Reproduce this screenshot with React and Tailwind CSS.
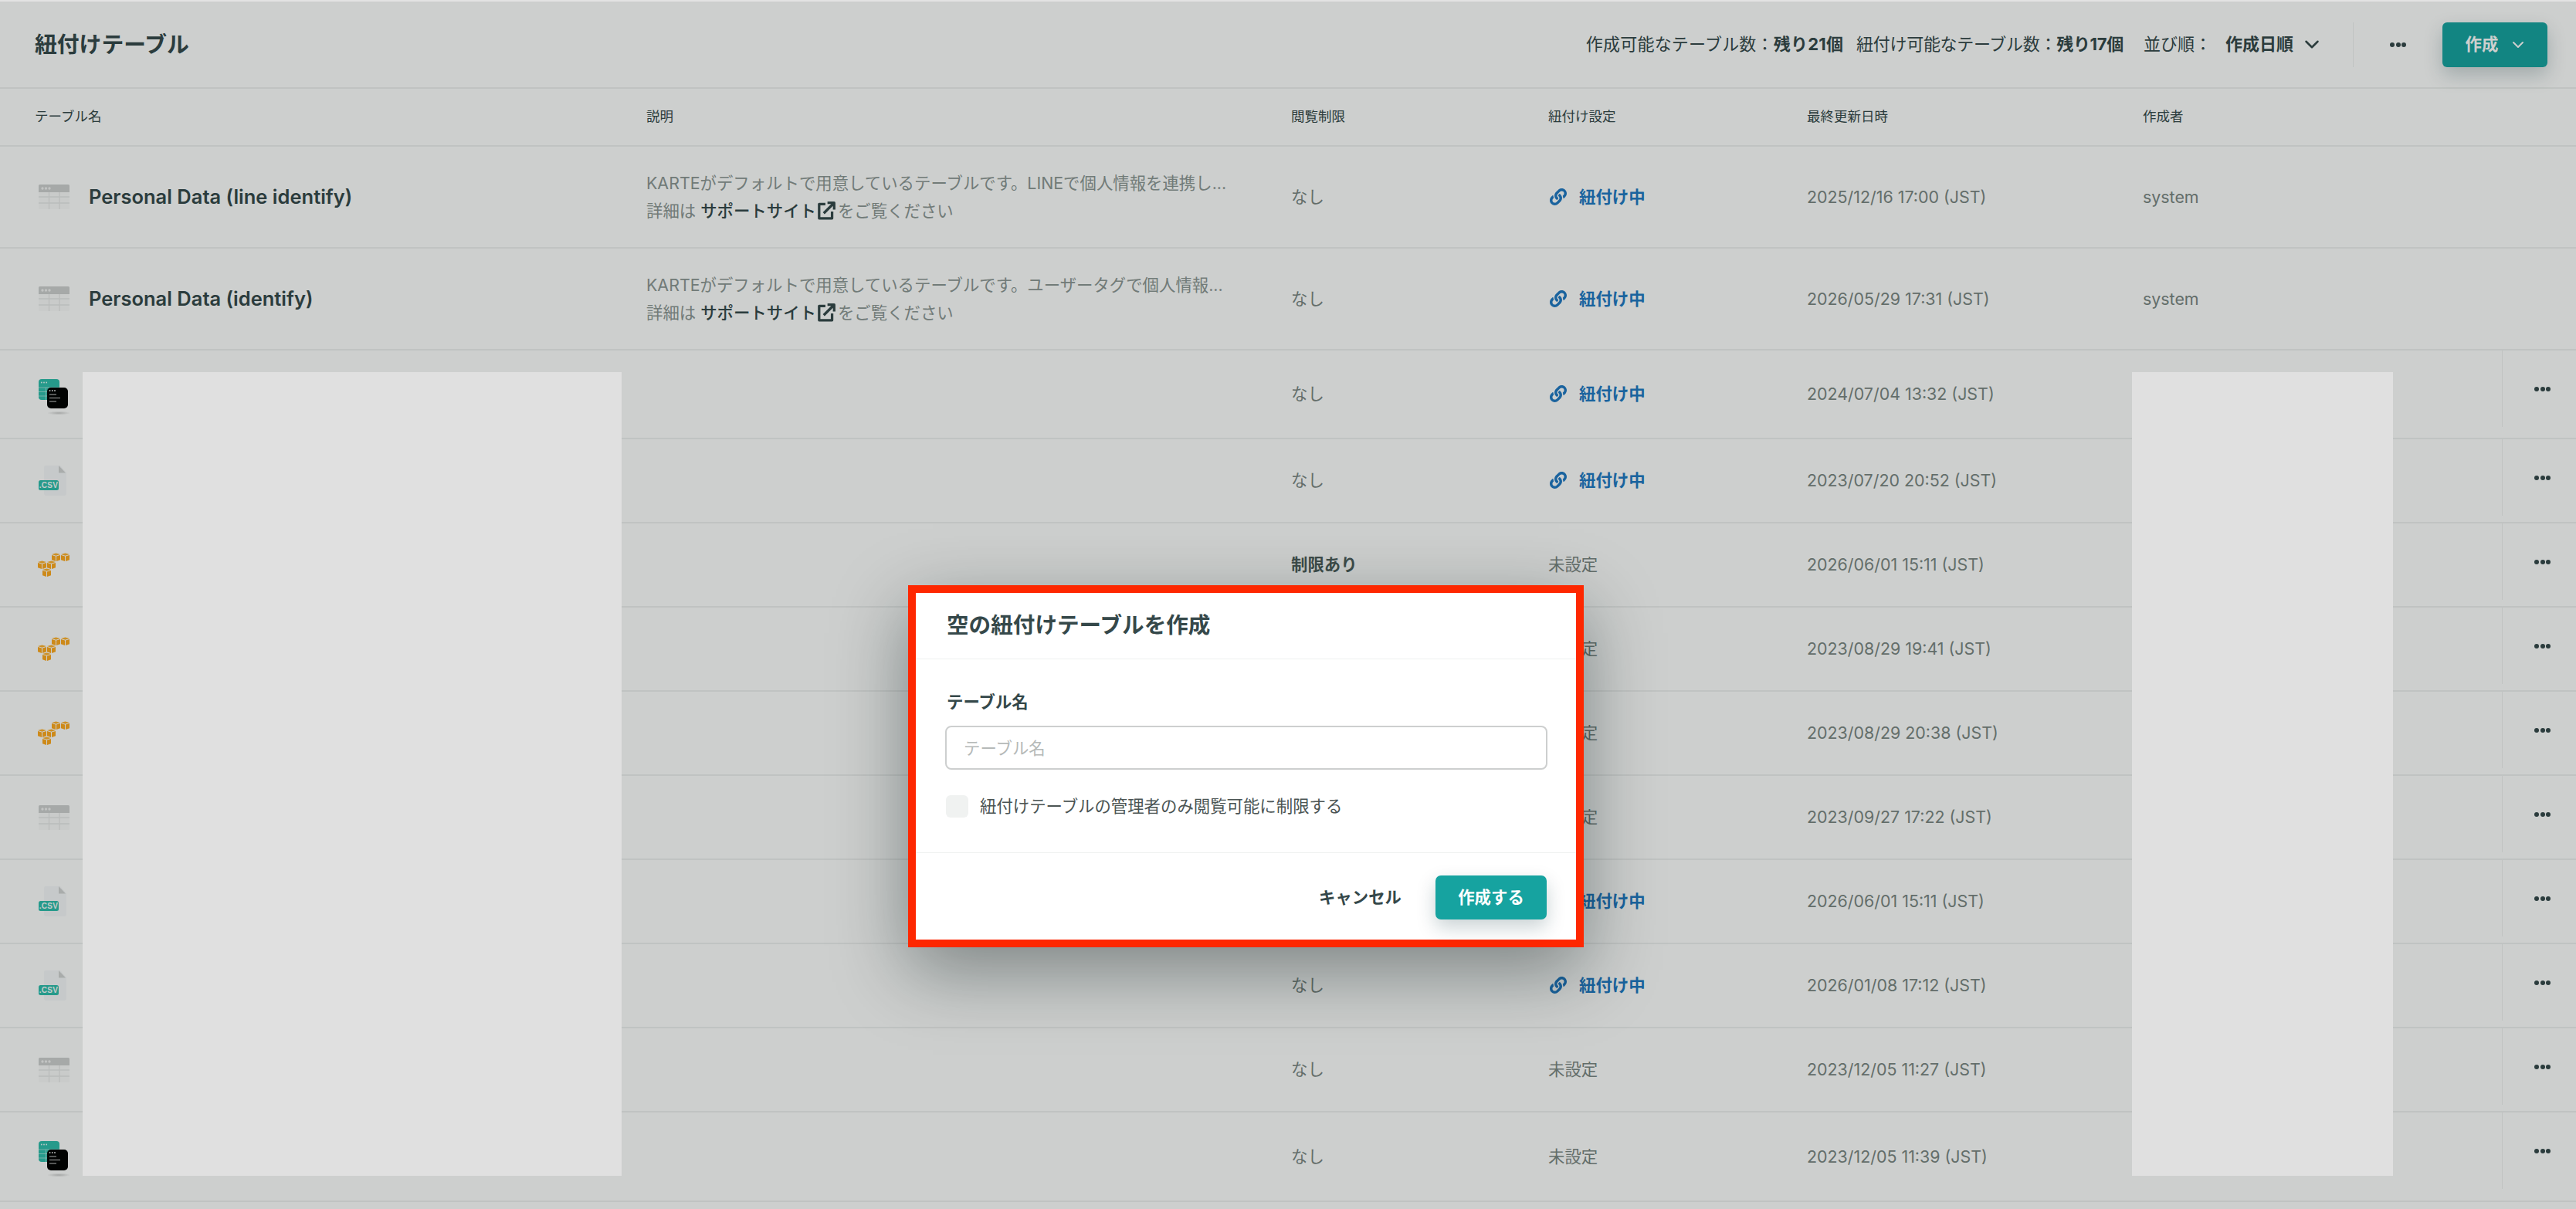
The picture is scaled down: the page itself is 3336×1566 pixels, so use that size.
import React from "react";
import { FaLink } from "react-icons/fa";

const rows = [
    { icon: "table", name: "Personal Data (line identify)", desc: "KARTEがデフォルトで用意しているテーブルです。LINEで個人情報を連携し...", limit: "なし", linked: true, date: "2025/12/16 17:00 (JST)", author: "system", h: "h-[132px]" },
    { icon: "table", name: "Personal Data (identify)", desc: "KARTEがデフォルトで用意しているテーブルです。ユーザータグで個人情報...", limit: "なし", linked: true, date: "2026/05/29 17:31 (JST)", author: "system", h: "h-[132px]" },
    { icon: "bq", limit: "なし", linked: true, date: "2024/07/04 13:32 (JST)", h: "h-[115px]", actions: true },
    { icon: "csv", limit: "なし", linked: true, date: "2023/07/20 20:52 (JST)", h: "h-[109px]", actions: true },
    { icon: "aws", limit: "制限あり", strong: true, linked: false, date: "2026/06/01 15:11 (JST)", h: "h-[109px]", actions: true },
    { icon: "aws", limit: "制限あり", strong: true, linked: false, date: "2023/08/29 19:41 (JST)", h: "h-[109px]", actions: true },
    { icon: "aws", limit: "制限あり", strong: true, linked: false, date: "2023/08/29 20:38 (JST)", h: "h-[109px]", actions: true },
    { icon: "table", limit: "なし", linked: false, date: "2023/09/27 17:22 (JST)", h: "h-[109px]", actions: true },
    { icon: "csv", limit: "なし", linked: true, date: "2026/06/01 15:11 (JST)", h: "h-[109px]", actions: true },
    { icon: "csv", limit: "なし", linked: true, date: "2026/01/08 17:12 (JST)", h: "h-[109px]", actions: true },
    { icon: "table", limit: "なし", linked: false, date: "2023/12/05 11:27 (JST)", h: "h-[109px]", actions: true },
    { icon: "bq", limit: "なし", linked: false, date: "2023/12/05 11:39 (JST)", h: "h-[116px]", actions: true },
];

const gridCols = "grid grid-cols-[792px_835px_333px_335px_435px_465px_1fr] pl-[45px]";

const Dots = () => (
    <span className="flex gap-[1.5px]">
        <span className="w-[6px] h-[6px] rounded-full bg-[#35484a]" />
        <span className="w-[6px] h-[6px] rounded-full bg-[#35484a]" />
        <span className="w-[6px] h-[6px] rounded-full bg-[#35484a]" />
    </span>
);

const Chevron = ({ className }) => (
    <svg viewBox="0 0 16 10" className={className} fill="none" stroke="currentColor" strokeWidth="2" strokeLinecap="round" strokeLinejoin="round">
        <path d="M2 2l6 6 6-6" />
    </svg>
);

const TableIcon = () => (
    <svg width="40" height="32" viewBox="0 0 40 32" className="ml-[5px]">
        <rect x="0" y="0" width="40" height="32" rx="1.5" fill="#fbfbfb" />
        <path d="M1.5 0h37A1.5 1.5 0 0 1 40 1.5V10H0V1.5A1.5 1.5 0 0 1 1.5 0z" fill="#cfd0d0" />
        <circle cx="5" cy="5" r="1.7" fill="#f2f2f2" />
        <circle cx="9.5" cy="5" r="1.7" fill="#f2f2f2" />
        <circle cx="14" cy="5" r="1.7" fill="#f2f2f2" />
        <path d="M0 16h40M0 24h40M13.500 10v22M27 10v22" stroke="#e8e9e9" strokeWidth="1.400" />
    </svg>
);

const BqIcon = () => (
    <svg width="40" height="46" viewBox="0 0 40 46" className="ml-[5px] mt-[6px]">
        <defs>
            <radialGradient id="bq-shadow">
                <stop offset="0" stopColor="#000" stopOpacity="0.2" />
                <stop offset="1" stopColor="#000" stopOpacity="0" />
            </radialGradient>
        </defs>
        <ellipse cx="26" cy="44" rx="15" ry="2.500" fill="url(#bq-shadow)" />
        <rect x="0" y="0" width="27" height="27" rx="4" fill="#2fbdac" />
        <path d="M0 11h27M0 16.500h27M0 22h27M9.500 11v16M18 11v16" stroke="#a9e3da" strokeWidth="0.800" />
        <circle cx="3.800" cy="4.500" r="0.900" fill="#e4f7f4" />
        <circle cx="7" cy="4.500" r="0.900" fill="#e4f7f4" />
        <circle cx="10.200" cy="4.500" r="0.900" fill="#e4f7f4" />
        <rect x="11" y="11" width="27" height="27" rx="5" fill="#000" />
        <circle cx="14.600" cy="15" r="0.900" fill="#eee" />
        <circle cx="17.800" cy="15" r="0.900" fill="#eee" />
        <circle cx="21" cy="15" r="0.900" fill="#eee" />
        <path d="M14 20h9M14 24.500h14M14 29h9" stroke="#d5d5d5" strokeWidth="1.200" />
    </svg>
);

const CsvIcon = () => (
    <svg width="40" height="39" viewBox="0 0 40 39" className="ml-[5px]">
        <path d="M9 0h19l8 9.500V36a3 3 0 0 1-3 3H10a3 3 0 0 1-3-3V2a2 2 0 0 1 2-2z" fill="#f7f8fa" />
        <path d="M26 0l9 9.500h-9z" fill="#d2d4d4" />
        <rect x="0" y="19" width="26" height="13" rx="2.500" fill="#2fbdac" />
        <text x="13" y="29" textAnchor="middle" fontSize="10" fontWeight="700" fill="#f4fbfa" fontFamily="'Liberation Sans', sans-serif" letterSpacing="0.300">.CSV</text>
    </svg>
);

const Cube = ({ x, y }) => (
    <g transform={`translate(${x} ${y})`}>
        <path d="M5.500 0l5.500 1.600-5.500 1.700L0 1.600z" fill="#ffb22e" />
        <path d="M0 2.500l5 1.600V10.500L0 8.700z" fill="#ffa91f" />
        <path d="M11 2.500L6 4.100V10.500l5-1.800z" fill="#ffa91f" />
    </g>
);

const AwsIcon = () => (
    <svg width="42" height="31" viewBox="0 0 42 31" className="ml-[4px]">
        <Cube x={0} y={10.500} />
        <Cube x={12} y={10.500} />
        <Cube x={6} y={20.500} />
        <Cube x={18} y={0.500} />
        <Cube x={30} y={0.500} />
    </svg>
);

const icons = { table: TableIcon, bq: BqIcon, csv: CsvIcon, aws: AwsIcon };

const ExternalGlyph = () => (
    <svg viewBox="0 0 24 24" className="w-[26px] h-[26px] mr-[2px] text-[#35484a]" fill="none" stroke="currentColor" strokeWidth="3" strokeLinejoin="round">
        <path d="M11 4H3.500v17H19v-8" />
        <path d="M9 15L21 3M13.500 2.500h8v8" />
    </svg>
);

const Row = ({ row }) => {
    const Icon = icons[row.icon];
    return (
        <div className={`${gridCols} ${row.h} items-center border-b-[2px] border-[#eff1f0] box-border`}>
            <div className="flex items-center">
                <Icon />
                {row.name && (
                    <span className="ml-[25px] text-[25.5px] font-semibold text-[#35484a]">{row.name}</span>
                )}
            </div>
            <div>
                {row.desc && (
                    <div className="text-[21.4px] leading-[36px] text-[#8d9694] whitespace-nowrap">
                        <div>{row.desc}</div>
                        <div className="flex items-center">
                            詳細は
                            <span className="ml-[6px] font-medium text-[#35484a]">サポートサイト</span>
                            <ExternalGlyph />
                            をご覧ください
                        </div>
                    </div>
                )}
            </div>
            <div className={row.strong ? "text-[21.4px] font-semibold text-[#4c5c5a]" : "text-[21.4px] text-[#7b8683]"}>
                {row.limit}
            </div>
            <div>
                {row.linked ? (
                    <div className="flex items-center gap-[16px] pl-[2px] text-[21.4px] font-semibold text-[#2079c4]">
                        <FaLink className="w-[22px] h-[22px]" />
                        紐付け中
                    </div>
                ) : (
                    <span className="text-[21.4px] text-[#7b8683]">未設定</span>
                )}
            </div>
            <div className="text-[21.4px] text-[#7b8683]">{row.date}</div>
            <div className="text-[21.4px] text-[#7b8683]">{row.author}</div>
            <div className="self-start h-[99px]">
                {row.actions && (
                    <div className="h-full border-l-[1px] border-[#eff1f0] flex items-center justify-center pl-[8px]">
                        <Dots />
                    </div>
                )}
            </div>
        </div>
    );
};

const Header = () => (
    <div className="h-[115px] border-b-[2px] border-[#eff1f0] box-border flex items-center pl-[45px] pr-[37px] pt-[2px]">
        <h1 className="text-[28.8px] font-bold text-[#35484a]">紐付けテーブル</h1>
        <div className="ml-auto flex items-center text-[22px] text-[#35484a]">
            <span className="tracking-[0.2px]">作成可能なテーブル数：<b className="font-bold">残り21個</b></span>
            <span className="ml-[17px] tracking-[-0.3px]">紐付け可能なテーブル数：<b className="font-bold">残り17個</b></span>
            <span className="ml-[26px]">並び順：</span>
            <b className="ml-[18px] font-bold">作成日順</b>
            <Chevron className="ml-[14px] w-[20px] h-[13px]" />
            <div className="ml-[43px] w-[1px] h-[58px] bg-[#eff1f0]" />
            <div className="ml-[47px] mr-[47px]">
                <Dots />
            </div>
            <button className="w-[136px] h-[58px] rounded-[6px] bg-[#16a3a0] text-white text-[21.4px] font-semibold flex items-center justify-center gap-[18px] shadow-[0_10px_24px_rgba(10,50,60,0.22)]">
                作成
                <Chevron className="w-[16px] h-[10px]" />
            </button>
        </div>
    </div>
);

const TableHead = () => (
    <div className={`${gridCols} h-[75px] items-center border-b-[2px] border-[#eff1f0] box-border text-[17.5px] text-[#35484a]`}>
        <div>テーブル名</div>
        <div>説明</div>
        <div>閲覧制限</div>
        <div>紐付け設定</div>
        <div>最終更新日時</div>
        <div>作成者</div>
    </div>
);

const CreateModal = () => (
    <div className="absolute left-[1176px] top-[758px] w-[875px] h-[469px] border-[10px] border-[#fe2700] bg-white shadow-[0_30px_90px_rgba(5,20,20,0.4)] flex flex-col text-[#35484a]">
        <div className="h-[86px] shrink-0 border-b-[1px] border-[#eff1f0] flex items-center pl-[40px]">
            <h2 className="text-[28.6px] font-bold">空の紐付けテーブルを作成</h2>
        </div>
        <div className="h-[251px] shrink-0 border-b-[1px] border-[#eff1f0] pl-[38px] pr-[37px] pt-[41px]">
            <label className="block pl-[2px] text-[21.4px] font-semibold leading-[28px]">テーブル名</label>
            <input
                placeholder="テーブル名"
                className="block mt-[17px] w-full h-[57px] rounded-[8px] border-[2px] border-[#cdcfcf] px-[22px] text-[21.4px] placeholder:text-[#b5b9b8] outline-none"
            />
            <div className="mt-[31px] flex items-center pl-[1px] text-[21.4px] text-[#4b5453]">
                <span className="w-[29px] h-[29px] rounded-[6px] bg-[#f0f2f1]" />
                <span className="ml-[15px]">紐付けテーブルの管理者のみ閲覧可能に制限する</span>
            </div>
        </div>
        <div className="flex-1 flex items-start justify-end pt-[29px] pr-[38px]">
            <button className="text-[21.4px] font-semibold mr-[44px] h-[57px]">キャンセル</button>
            <button className="w-[144px] h-[57px] rounded-[7px] bg-[#16a3a0] text-white text-[21.4px] font-semibold shadow-[0_10px_24px_rgba(10,50,60,0.22)]">
                作成する
            </button>
        </div>
    </div>
);

export default function App() {
    return (
        <div className="relative h-screen w-full overflow-hidden bg-white font-['Inter','Noto_Sans_CJK_JP',sans-serif]">
            <Header />
            <TableHead />
            {rows.map((row, i) => (
                <Row key={i} row={row} />
            ))}
            {/* dimmed backdrop + masked areas sit on top of the table */}
            <div className="absolute inset-0 bg-[#050f0a]/20" />
            <div className="absolute left-0 right-0 top-0 h-[2px] bg-[#e3e3e3]" />
            <div className="absolute left-[107px] top-[482px] w-[698px] h-[1041px] bg-[#e0e0e0]" />
            <div className="absolute left-[2761px] top-[482px] w-[338px] h-[1041px] bg-[#e0e0e0]" />
            <CreateModal />
        </div>
    );
}
